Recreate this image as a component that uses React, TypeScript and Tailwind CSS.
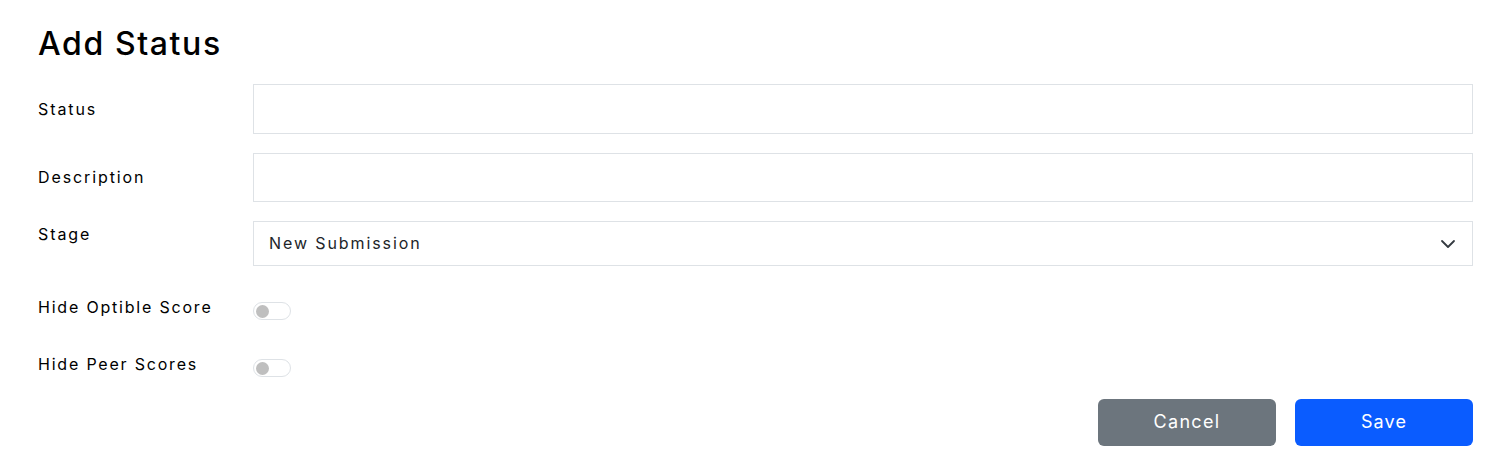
import React from "react";

function Toggle() {
  return (
    <div className="mt-[7px] flex h-[18px] w-[38px] items-center rounded-full border border-[#dee2e6] bg-white pl-[2px]">
      <div className="h-[13px] w-[13px] rounded-full bg-[#bfbfbf]" />
    </div>
  );
}

export default function App() {
  return (
    <div
      className="min-h-[471px] bg-white pl-[38px] pr-[39px] pt-[25px] text-black"
      style={{ fontFamily: "Inter, 'Noto Sans', sans-serif" }}
    >
      <h2 className="mb-[21px] text-[32px] font-medium leading-[38px] tracking-[1.6px] text-black">Add Status</h2>

      <div className="mb-[19px] flex h-[50px] items-center">
        <label className="w-[215px] shrink-0 text-[16px] leading-6 tracking-[1.9px]">Status</label>
        <input className="h-full flex-1 border border-[#dee2e6] bg-white px-[15px] outline-none" />
      </div>

      <div className="mb-[19px] flex h-[49px] items-center">
        <label className="-mt-[2px] w-[215px] shrink-0 text-[16px] leading-6 tracking-[1.9px]">Description</label>
        <input className="h-full flex-1 border border-[#dee2e6] bg-white px-[15px] outline-none" />
      </div>

      <div className="mb-[29px] flex items-start">
        <label className="w-[215px] shrink-0 pt-px text-[16px] leading-6 tracking-[1.9px]">Stage</label>
        <div className="flex h-[45px] flex-1 items-center justify-between border border-[#dee2e6] bg-white pl-[15px] pr-[16px] text-[16px] text-[#212529]">
          <span className="-mt-[2px] tracking-[1.9px]">New Submission</span>
          <svg width="16" height="16" viewBox="0 0 16 16" fill="none">
            <path d="M2 5l6 6 6-6" stroke="#343a40" strokeWidth="1.8" strokeLinecap="round" strokeLinejoin="round" />
          </svg>
        </div>
      </div>

      <div className="mb-[32px] flex items-start">
        <label className="w-[215px] shrink-0 text-[16px] leading-6 tracking-[1.8px]">Hide Optible Score</label>
        <Toggle />
      </div>

      <div className="mb-[22px] flex items-start">
        <label className="w-[215px] shrink-0 text-[16px] leading-6 tracking-[1.8px]">Hide Peer Scores</label>
        <Toggle />
      </div>

      <div className="flex justify-end gap-[19px]">
        <button className="h-[47px] w-[178px] rounded-[6px] bg-[#6c757d] pb-[2px] text-[18px] tracking-[1.3px] text-white">Cancel</button>
        <button className="h-[47px] w-[178px] rounded-[6px] bg-[#0a5cff] pb-[2px] text-[18px] tracking-[1.1px] text-white">Save</button>
      </div>
    </div>
  );
}
